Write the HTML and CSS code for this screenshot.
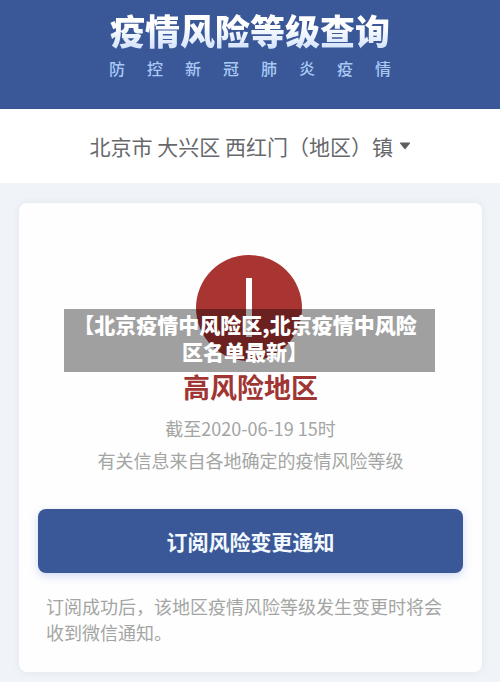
FILE: index.html
```html
<!DOCTYPE html>
<html lang="zh-CN">
<head>
<meta charset="utf-8">
<meta name="viewport" content="width=device-width, initial-scale=1">
<title>疫情风险等级查询</title>
<link rel="stylesheet" href="styles.css">
</head>
<body>
<header class="banner">
  <h1 class="banner-title">疫情风险等级查询</h1>
  <p class="banner-subtitle">防控新冠肺炎疫情</p>
</header>
<div class="region">
  <select class="region-select" aria-label="地区">
    <option>北京市 大兴区 西红门（地区）镇</option>
  </select>
  <svg class="region-caret" viewBox="0 0 12 8" aria-hidden="true"><path d="M1.5 0.5h9q1 0 .4 .9L6.7 6.8q-.7 .8-1.4 0L1.1 1.4q-.6-.9 .4-.9z"/></svg>
</div>
<main class="card">
  <section class="result">
    <svg class="result-icon" viewBox="0 0 106 106" aria-hidden="true">
      <circle cx="53" cy="53" r="53" fill="#a83531"/>
      <path d="M50 23h6v59h-6z" fill="#fff"/>
    </svg>
    <h2 class="result-level">高风险地区</h2>
    <p class="result-text">截至2020-06-19 15时</p>
    <p class="result-text">有关信息来自各地确定的疫情风险等级</p>
    <div class="caption">【北京疫情中风险区,北京疫情中风险区名单最新】</div>
  </section>
  <button class="subscribe" type="button">订阅风险变更通知</button>
  <p class="note">订阅成功后，该地区疫情风险等级发生变更时将会收到微信通知。</p>
</main>
</body>
</html>
```
FILE: styles.css
```css
* {
  box-sizing: border-box;
}

body {
  margin: 0;
  background: #f0f3f8;
  color: #a3a5a3;
  font-family: "Noto Sans CJK SC", sans-serif;
}

h1, h2, p {
  margin: 0;
}

.banner {
  padding: 8px 0 28px;
  background: #3a5898;
  text-align: center;
}

.banner-title {
  margin-bottom: 4px;
  background: linear-gradient(#fff 40%, #d6e5fb 90%);
  background-clip: text;
  color: transparent;
  font-size: 35px;
  font-weight: 900;
  line-height: 44px;
}

.banner-subtitle {
  padding-left: 22px;
  color: #a9c9f4;
  font-size: 16px;
  font-weight: 500;
  letter-spacing: 22px;
  line-height: 25px;
}

.region {
  display: flex;
  align-items: center;
  justify-content: center;
  gap: 5px;
  height: 74px;
  background: #fff;
}

.region-select {
  appearance: none;
  padding: 0;
  border: 0;
  background: transparent;
  color: #66686b;
  font: inherit;
  font-size: 21px;
  line-height: 32px;
}

.region-caret {
  width: 12px;
  height: 8px;
  fill: #5c5e61;
}

.card {
  margin: 20px 18px 10px 19px;
  padding: 52px 19px 27px;
  border-radius: 8px;
  background: #fefefe;
  box-shadow: 0 0 6px rgba(200, 215, 225, 0.4);
}

.result {
  position: relative;
  display: flex;
  flex-direction: column;
  align-items: center;
}

.result-icon {
  width: 106px;
  height: 106px;
  margin-right: 3px;
}

.result-level {
  margin: 7px 0 6px;
  color: #a03633;
  font-size: 27px;
  line-height: 38px;
}

.result-text {
  font-size: 18px;
  line-height: 32px;
}

.caption {
  position: absolute;
  top: 54px;
  right: 28px;
  left: 26px;
  padding: 2px 17px 7px 8px;
  background: rgba(0, 0, 0, 0.37);
  color: #fff;
  font-size: 21px;
  font-weight: 900;
  line-height: 27px;
  text-align: center;
}

.subscribe {
  display: block;
  width: 100%;
  height: 64px;
  margin-top: 33px;
  border: 0;
  border-radius: 8px;
  background: #3a5898;
  box-shadow: 0 3px 8px rgba(80, 110, 220, 0.25);
  color: #f3f8ff;
  font: inherit;
  font-size: 21px;
  font-weight: 700;
}

.note {
  margin: 20px 11px 0 8px;
  font-size: 18px;
  line-height: 26px;
}
```
